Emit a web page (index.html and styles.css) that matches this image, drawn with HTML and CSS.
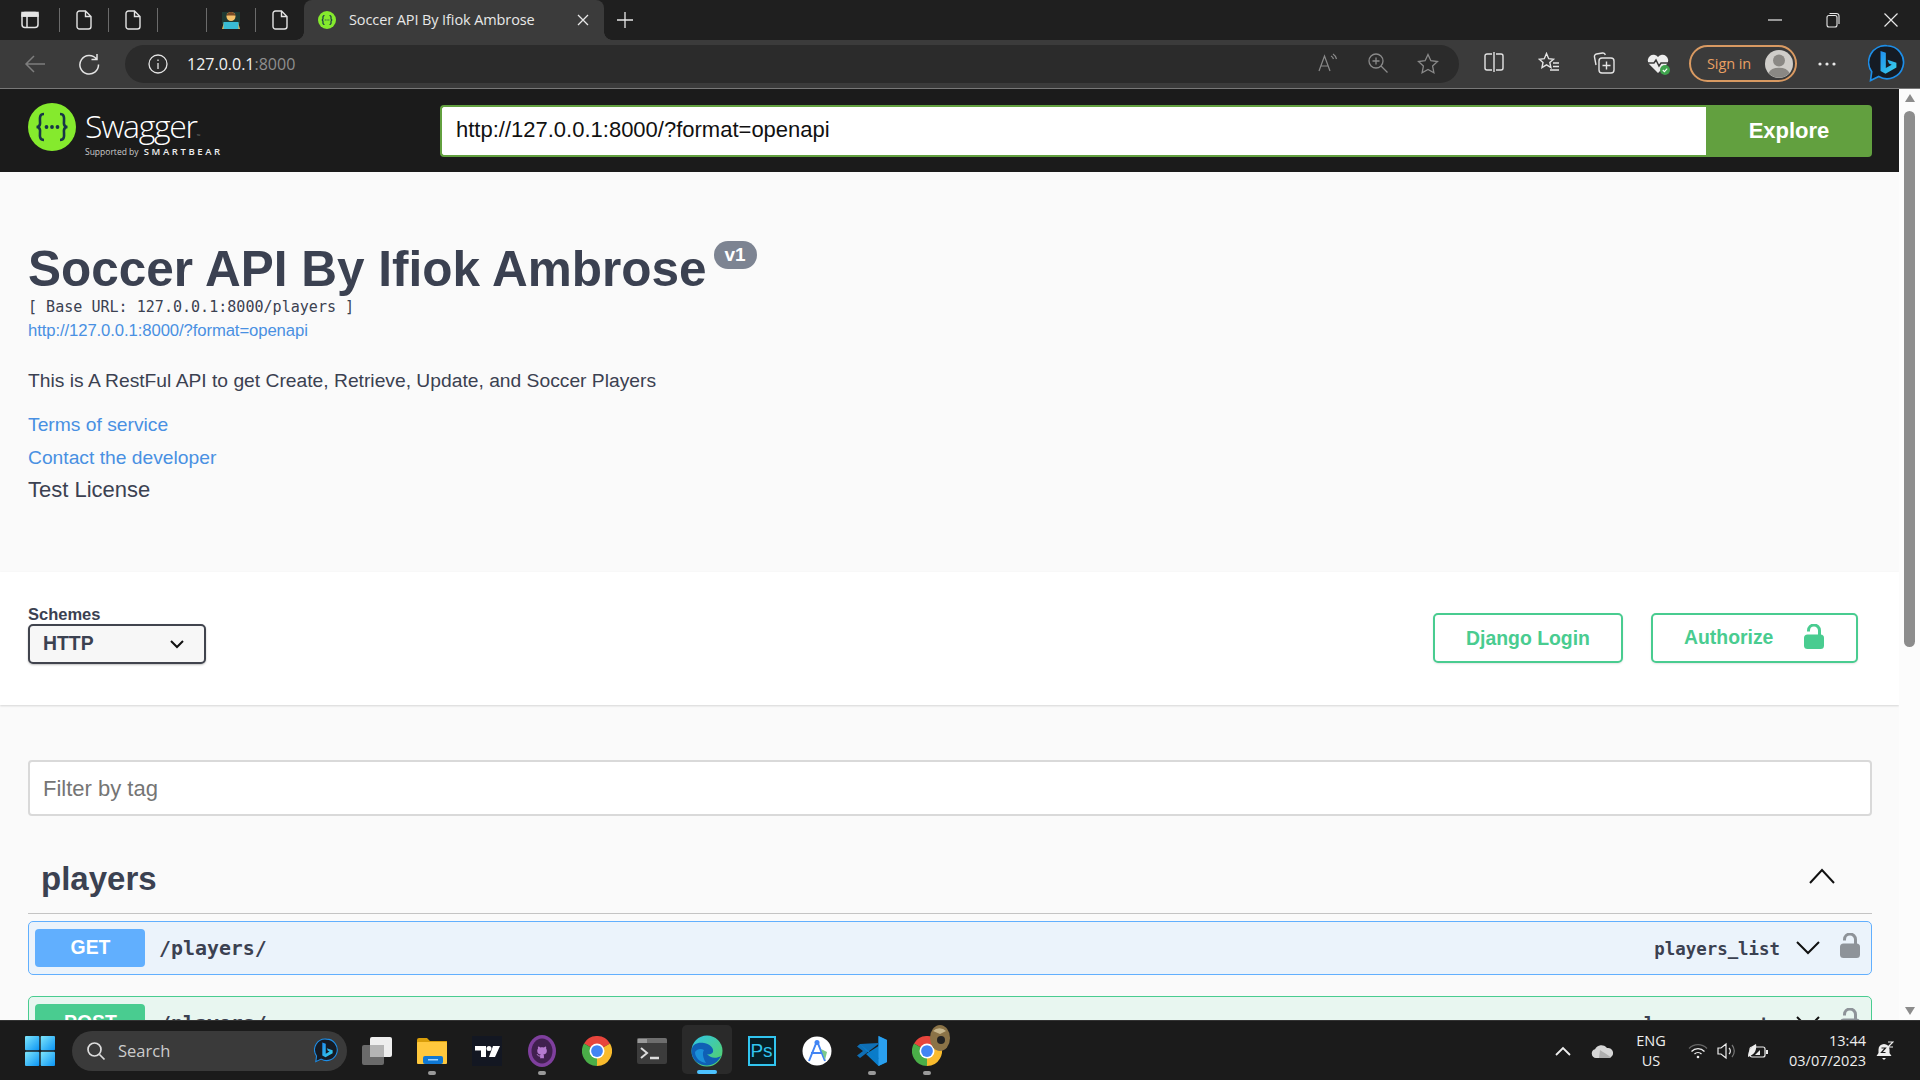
FILE: index.html
```html
<!DOCTYPE html>
<html lang="en">
<head>
    <meta charset="UTF-8">
    <meta name="viewport" content="width=device-width, initial-scale=1.0">
    <title>Soccer API By Ifiok Ambrose</title>
    <link rel="stylesheet" href="styles.css">
</head>
<body>

    <svg class="defs" width="0" height="0">
        <defs>
            <linearGradient id="bingGrad" x1="0" y1="0" x2="1" y2="1">
                <stop offset="0" stop-color="#1f8ef0"/>
                <stop offset="1" stop-color="#39d2e8"/>
            </linearGradient>
            <linearGradient id="edgeGrad" x1="0" y1="0" x2="1" y2="1">
                <stop offset="0" stop-color="#2fc4e8"/>
                <stop offset="1" stop-color="#58d25f"/>
            </linearGradient>
            <linearGradient id="startGrad" x1="0" y1="0" x2="1" y2="1">
                <stop offset="0" stop-color="#7fe6fb"/>
                <stop offset="1" stop-color="#0a94f5"/>
            </linearGradient>
            <symbol id="doc" viewBox="0 0 16 20">
                <path d="M3.5 1h6L15 6.5v10a2.5 2.5 0 0 1-2.5 2.5h-9A2.5 2.5 0 0 1 1 16.5v-13A2.5 2.5 0 0 1 3.500 1zM9.5 1v5.500H15" fill="none" stroke="#e4e4e4" stroke-width="1.4"/>
            </symbol>
            <symbol id="lock" viewBox="0 0 20 25">
                <path d="M4.5 7.500V6.500a5.500 5.500 0 0 1 11 0V12" fill="none" stroke="currentColor" stroke-width="3"/>
                <rect y="10.5" width="20" height="14.5" rx="3.5" fill="currentColor"/>
            </symbol>
            <symbol id="bing" viewBox="0 0 32 34">
                <path d="M16 1.500a14 14 0 1 1-7 26.100L2 31l1-7.500A14 14 0 0 1 16 1.500z" fill="#151b24" stroke="#1d8ee8" stroke-width="1.4"/>
                <path d="M10.500 6l4.500 1.500v13l5-2.800-2.300-1.100-1.300-3.300 7.600 2.700v4l-9.300 5.300-4.200-2.300z" fill="url(#bingGrad)"/>
            </symbol>
            <symbol id="chrome" viewBox="0 0 24 24">
                <path d="M12 12L1.600 6A12 12 0 0 1 22.400 6z" fill="#e8453c"/>
                <path d="M12 12L22.400 6A12 12 0 0 1 12 24z" fill="#f9bb2d"/>
                <path d="M12 12L12 24A12 12 0 0 1 1.600 6z" fill="#4aae48"/>
                <circle cx="12" cy="12" r="6" fill="#fff"/>
                <circle cx="12" cy="12" r="4.7" fill="#4285f4"/>
            </symbol>
        </defs>
    </svg>

    <!-- tab strip -->
    <div class="tabstrip">
        <div class="pin pin-first">
            <svg width="18" height="18" viewBox="0 0 18 18" fill="none" stroke="#e4e4e4" stroke-width="1.5"><rect x="1" y="1.5" width="16" height="15" rx="3"/><path d="M1 5h16M6 5v11.500"/><rect x="1" y="1.5" width="16" height="3.5" fill="#e4e4e4"/></svg>
        </div>
        <span class="sep"></span>
        <div class="pin"><svg width="16" height="20"><use href="#doc"/></svg></div>
        <span class="sep"></span>
        <div class="pin"><svg width="16" height="20"><use href="#doc"/></svg></div>
        <span class="sep"></span>
        <div class="pin"></div>
        <span class="sep"></span>
        <div class="pin">
            <svg width="20" height="20" viewBox="0 0 20 20"><rect x="1" y="2" width="18" height="12" fill="#1e3a34"/><circle cx="10" cy="6.5" r="4.5" fill="#f4c26b"/><path d="M5.500 6a4.500 4 0 0 1 9 0l-1-.5H6.500z" fill="#7a4a26"/><path d="M3 12h14l2 7H1z" fill="#f3b64a"/><rect x="2.5" y="12" width="15" height="7" fill="#39bcd4"/></svg>
        </div>
        <span class="sep"></span>
        <div class="pin"><svg width="16" height="20"><use href="#doc"/></svg></div>
        <div class="tab">
            <svg class="tab-fav" width="18" height="18" viewBox="0 0 18 18"><circle cx="9" cy="9" r="9" fill="#85ea2d"/><path d="M6.500 4.500c-2 0-1.500 2-1.500 3 0 1-.5 1.500-1.300 1.500.8 0 1.300.5 1.300 1.500s-.5 3 1.500 3M11.500 4.500c2 0 1.500 2 1.500 3 0 1 .5 1.500 1.300 1.500-.8 0-1.300.5-1.300 1.500s.5 3-1.500 3" fill="none" stroke="#173647" stroke-width="1.2"/><path d="M6.800 9h.9M8.600 9h.9M10.400 9h.9" stroke="#173647" stroke-width="1.2"/></svg>
            <span class="tab-title">Soccer API By Ifiok Ambrose</span>
            <svg class="tab-close" width="12" height="12" viewBox="0 0 12 12"><path d="M1 1l10 10M11 1L1 11" stroke="#e8e8e8" stroke-width="1.3"/></svg>
        </div>
        <svg class="tab-new" width="18" height="18" viewBox="0 0 18 18"><path d="M9 1v16M1 9h16" stroke="#e8e8e8" stroke-width="1.3"/></svg>
        <div class="win-btns">
            <svg width="14" height="14" viewBox="0 0 14 14"><path d="M0 7h14" stroke="#e8e8e8" stroke-width="1.2"/></svg>
            <svg width="14" height="16" viewBox="0 0 14 16" fill="none" stroke="#e8e8e8" stroke-width="1.1"><rect x="1" y="3.5" width="10" height="11.5" rx="2"/><path d="M3.500 1.500h7a2.500 2.500 0 0 1 2.500 2.500v8"/></svg>
            <svg width="14" height="14" viewBox="0 0 14 14"><path d="M.5.5l13 13M13.500.5l-13 13" stroke="#e8e8e8" stroke-width="1.2"/></svg>
        </div>
    </div>

    <!-- toolbar -->
    <div class="toolbar">
        <div class="tb-btn">
            <svg width="22" height="20" viewBox="0 0 22 20" fill="none" stroke="#7e7e7e" stroke-width="1.5"><path d="M21 10H2M10 2l-8 8 8 8"/></svg>
        </div>
        <div class="tb-btn">
            <svg width="22" height="22" viewBox="0 0 22 22" fill="none" stroke="#e4e4e4" stroke-width="1.5"><path d="M18.500 6a9.300 9.300 0 1 0 2 5.500M19 1v5.500h-5.500"/></svg>
        </div>
        <div class="address">
            <svg class="addr-info" width="20" height="20" viewBox="0 0 20 20" fill="none" stroke="#e4e4e4" stroke-width="1.3"><circle cx="10" cy="10" r="9"/><path d="M10 9v6M10 5.500v1.500"/></svg>
            <span class="addr-text">127.0.0.1<span class="addr-port">:8000</span></span>
            <div class="addr-right">
                <div class="addr-btn">
                    <svg width="20" height="20" viewBox="0 0 20 20" fill="none" stroke="#8a8a8a" stroke-width="1.2"><path d="M1 18L6.500 3 12 18M3 13h7"/><path d="M13 3a5 5 0 0 1 2.500 3M15 1a8 8 0 0 1 3.500 5"/></svg>
                </div>
                <div class="addr-btn">
                    <svg width="20" height="20" viewBox="0 0 20 20" fill="none" stroke="#8a8a8a" stroke-width="1.3"><circle cx="8" cy="8" r="7"/><path d="M13 13l6.500 6.500M8 4.500v7M4.500 8h7"/></svg>
                </div>
                <div class="addr-btn">
                    <svg width="22" height="22" viewBox="0 0 22 22" fill="none" stroke="#8a8a8a" stroke-width="1.3"><path d="M11 1.500l2.900 6.200 6.600.8-4.900 4.600 1.300 6.700L11 16.500l-5.900 3.300 1.300-6.700L1.500 8.500l6.600-.8z"/></svg>
                </div>
            </div>
        </div>
        <div class="tb-group">
            <div class="tb-icon">
                <svg width="20" height="20" viewBox="0 0 20 20" fill="none" stroke="#e4e4e4" stroke-width="1.4"><path d="M8 2H3a2 2 0 0 0-2 2v12a2 2 0 0 0 2 2h5M12 2h5a2 2 0 0 1 2 2v12a2 2 0 0 1-2 2h-5M10 0v20"/></svg>
            </div>
            <div class="tb-icon">
                <svg width="22" height="22" viewBox="0 0 22 22" fill="none" stroke="#e4e4e4" stroke-width="1.4"><path d="M8.500 1.500l2.200 5.200 4.800.5-3.700 3.300 1.100 5-4.400-2.600L4 15.500l1-5-3.700-3.300 5-.5zM15 11h6M15 14.500h6M12 18h9"/></svg>
            </div>
            <div class="tb-icon">
                <svg width="22" height="22" viewBox="0 0 22 22" fill="none" stroke="#e4e4e4" stroke-width="1.4"><path d="M3 13L1.500 5A2.500 2.500 0 0 1 3.500 2l6-1a2.500 2.500 0 0 1 2.800 2"/><rect x="6" y="6" width="15" height="15" rx="3"/><path d="M13.500 9.500v8M9.500 13.500h8"/></svg>
            </div>
            <div class="tb-icon">
                <svg width="24" height="24" viewBox="0 0 24 24"><path d="M11 21L2 12a5.500 5.500 0 0 1 9-7 5.500 5.500 0 0 1 9 7z" fill="#eee"/><path d="M1 11h6l2-3 3 6 2-3h8" fill="none" stroke="#3b3b3b" stroke-width="1.5"/><circle cx="18" cy="18" r="5" fill="#3fa34d"/><path d="M15.800 18l1.600 1.600 2.800-3" fill="none" stroke="#fff" stroke-width="1.1"/></svg>
            </div>
        </div>
        <div class="signin">
            <span class="signin-text">Sign in</span>
            <svg class="signin-avatar" width="28" height="28" viewBox="0 0 28 28"><circle cx="14" cy="14" r="14" fill="#cfcdc9"/><circle cx="14" cy="10.5" r="6" fill="#8a8884"/><path d="M3.500 23a11 7.500 0 0 1 21 0A14 14 0 0 1 3.500 23z" fill="#8a8884"/></svg>
        </div>
        <div class="tb-more">
            <svg width="18" height="4" viewBox="0 0 18 4" fill="#e8e8e8"><circle cx="2" cy="2" r="1.6"/><circle cx="9" cy="2" r="1.6"/><circle cx="16" cy="2" r="1.6"/></svg>
        </div>
        <div class="tb-bing"><svg width="38" height="40"><use href="#bing"/></svg></div>
    </div>

    <!-- page -->
    <div class="viewport">
        <div class="page">
            <div class="topbar">
                <div class="logo">
                    <svg width="48" height="48" viewBox="0 0 48 48"><circle cx="24" cy="24" r="24" fill="#85ea2d"/><path d="M16 11c-6 0-3.500 7-4 10-.3 2-1.500 3-3.500 3 2 0 3.200 1 3.500 3 .5 3-2 10 4 10M32 11c6 0 3.500 7 4 10 .3 2 1.500 3 3.500 3-2 0-3.200 1-3.500 3-.5 3 2 10-4 10" fill="none" stroke="#173647" stroke-width="2.6"/><circle cx="18.5" cy="24" r="1.9" fill="#173647"/><circle cx="24" cy="24" r="1.9" fill="#173647"/><circle cx="29.5" cy="24" r="1.9" fill="#173647"/></svg>
                    <div class="logo-text">
                        <div class="logo-name">Swagger<span class="logo-tm">™</span></div>
                        <div class="logo-by">Supported by <span class="logo-sb">SMARTBEAR</span></div>
                    </div>
                </div>
                <div class="explore-form">
                    <div class="explore-input">http://127.0.0.1:8000/?format=openapi</div>
                    <div class="explore-btn">Explore</div>
                </div>
            </div>

            <div class="info">
                <h1 class="title">Soccer API By Ifiok Ambrose<span class="version">v1</span></h1>
                <div class="base-url">[ Base URL: 127.0.0.1:8000/players ]</div>
                <a class="spec-link">http://127.0.0.1:8000/?format=openapi</a>
                <p class="desc">This is A RestFul API to get Create, Retrieve, Update, and Soccer Players</p>
                <a class="info-link terms">Terms of service</a>
                <a class="info-link contact">Contact the developer</a>
                <div class="license">Test License</div>
            </div>

            <div class="schemes">
                <div class="schemes-left">
                    <div class="schemes-label">Schemes</div>
                    <div class="schemes-select">
                        <span class="schemes-value">HTTP</span>
                        <svg width="14" height="9" viewBox="0 0 14 9" fill="none" stroke="#111" stroke-width="2"><path d="M1 1l6 6 6-6"/></svg>
                    </div>
                </div>
                <div class="schemes-right">
                    <div class="auth-btn login-btn">Django Login</div>
                    <div class="auth-btn authorize-btn">
                        <span class="authorize-text">Authorize</span>
                        <svg class="lock-green" width="20" height="25"><use href="#lock"/></svg>
                    </div>
                </div>
            </div>

            <div class="ops">
                <div class="filter">Filter by tag</div>
                <div class="tag-head">
                    <h3 class="tag-name">players</h3>
                    <svg class="tag-caret" width="28" height="16" viewBox="0 0 28 16" fill="none" stroke="#111" stroke-width="2"><path d="M2 15L14 2l12 13"/></svg>
                </div>
                <div class="op op-get">
                    <span class="method">GET</span>
                    <span class="op-path">/players/</span>
                    <span class="op-id">players_list</span>
                    <svg class="op-caret" width="24" height="14" viewBox="0 0 24 14" fill="none" stroke="#111" stroke-width="2"><path d="M1 1l11 11L23 1"/></svg>
                    <svg class="op-lock" width="20" height="25"><use href="#lock"/></svg>
                </div>
                <div class="op op-post">
                    <span class="method">POST</span>
                    <span class="op-path">/players/</span>
                    <span class="op-id">players_create</span>
                    <svg class="op-caret" width="24" height="14" viewBox="0 0 24 14" fill="none" stroke="#111" stroke-width="2"><path d="M1 1l11 11L23 1"/></svg>
                    <svg class="op-lock" width="20" height="25"><use href="#lock"/></svg>
                </div>
            </div>
        </div>

        <div class="scrollbar">
            <span class="arrow-up"></span>
            <div class="thumb"></div>
            <span class="arrow-down"></span>
        </div>
    </div>

    <!-- taskbar -->
    <div class="taskbar">
        <svg class="start" width="30" height="30" viewBox="0 0 30 30" fill="url(#startGrad)"><rect width="14.3" height="14.3" rx="1"/><rect x="15.7" width="14.3" height="14.3" rx="1"/><rect y="15.7" width="14.3" height="14.3" rx="1"/><rect x="15.7" y="15.7" width="14.3" height="14.3" rx="1"/></svg>
        <div class="search">
            <svg width="20" height="20" viewBox="0 0 20 20" fill="none" stroke="#ddd" stroke-width="1.7"><circle cx="8.5" cy="8.5" r="6.5"/><path d="M13.500 13.500l5 5"/></svg>
            <span class="search-text">Search</span>
            <svg class="search-bing" width="25" height="26"><use href="#bing"/></svg>
        </div>
        <div class="apps">
            <div class="app">
                <svg width="30" height="28" viewBox="0 0 30 28"><rect y="8" width="22" height="20" rx="2" fill="#6a6a6a"/><rect x="8" width="22" height="20" rx="2" fill="#eee"/><rect x="8" y="8" width="14" height="12" fill="#b4b4b4"/></svg>
            </div>
            <div class="app app-open">
                <svg width="30" height="26" viewBox="0 0 30 26"><path d="M0 2a2 2 0 0 1 2-2h8l3 3h17v3H0z" fill="#d99e0a"/><rect y="4" width="30" height="22" rx="1" fill="#ffc83d"/><rect x="6" y="18" width="20" height="8" rx="2" fill="#0f78d4"/><rect x="11" y="21" width="10" height="1.5" fill="#9fd4ff"/></svg>
            </div>
            <div class="app">
                <svg width="30" height="30" viewBox="0 0 30 30"><rect width="30" height="30" fill="#131722"/><path d="M3 10h11v11H9v-6.500H3z" fill="#fff"/><circle cx="17" cy="12.5" r="2.5" fill="#fff"/><path d="M21 10h7l-5 11h-6z" fill="#fff"/></svg>
            </div>
            <div class="app app-open">
                <svg width="28" height="32" viewBox="0 0 28 32"><ellipse cx="14" cy="16" rx="14" ry="16" fill="#7f3f9e"/><ellipse cx="14" cy="16" rx="10.5" ry="12.5" fill="#40204f"/><g transform="translate(6.5 8.5) scale(.94)"><path d="M5.470 15.590c.4.070.55-.17.55-.38v-1.490c-2.010.37-2.530-.49-2.690-.94-.09-.23-.48-.94-.82-1.130-.28-.15-.68-.52-.01-.53.63-.01 1.080.58 1.230.82.720 1.210 1.870.870 2.330.660.070-.520.280-.870.510-1.070-1.780-.2-3.640-.89-3.640-3.950 0-.87.310-1.590.820-2.150-.08-.2-.36-1.020.08-2.120 0 0 .67-.21 2.200.820.640-.18 1.320-.27 2-.27s1.360.09 2 .27c1.530-1.040 2.200-.82 2.200-.82.440 1.100.16 1.920.08 2.120.51.560.82 1.270.82 2.150 0 3.070-1.870 3.750-3.650 3.950.29.250.54.730.54 1.480v2.200c0 .21.150.46.55.38z" fill="#b57ad0"/></g></svg>
            </div>
            <div class="app">
                <svg width="30" height="30"><use href="#chrome"/></svg>
            </div>
            <div class="app">
                <svg width="30" height="26" viewBox="0 0 30 26"><rect width="30" height="26" rx="2" fill="#3c3c3c"/><path d="M0 2a2 2 0 0 1 2-2h26a2 2 0 0 1 2 2v3H0z" fill="#6e6e6e"/><rect x="1" y="1" width="9" height="4" fill="#9a9a9a"/><path d="M4 10l6 5-6 5" fill="none" stroke="#ddd" stroke-width="2"/><path d="M13 20h9" stroke="#ddd" stroke-width="2.5"/></svg>
            </div>
            <div class="app app-active">
                <svg width="32" height="32" viewBox="0 0 32 32"><circle cx="16" cy="16" r="15.5" fill="url(#edgeGrad)"/><path d="M.5 16C1 8 8 7 13 8c6 1 10 5 9 9-1 2-4 3-6 2 3 4 9 5 14 2-3 6-8 9.500-14 9.500C8 30.500.5 25 .5 16z" fill="#0f5fb5"/><path d="M4 17c2-3 6-4 9-2-2 3-1 8 2 13-6-1-11-5-11-11z" fill="#1b8fd8"/></svg>
            </div>
            <div class="app">
                <div class="ps"><span>Ps</span></div>
            </div>
            <div class="app">
                <svg width="30" height="30" viewBox="0 0 30 30"><circle cx="15" cy="15" r="14.5" fill="#fff"/><path d="M15 5l-8 20M15 5l8 20M9 17h12" fill="none" stroke="#4285f4" stroke-width="2"/><circle cx="15" cy="6.5" r="2.5" fill="#4285f4"/><path d="M19 13l6 3-2 8z" fill="#7cc98a"/></svg>
            </div>
            <div class="app app-open">
                <svg width="30" height="30" viewBox="0 0 30 30"><path d="M21.500 0L30 4v22l-8.500 4L9 18l12.500-8z" fill="#0a7cc9"/><path d="M21.500 0L30 4v22l-8.500 4z" fill="#2aa0ef"/><path d="M3 8L0 10.500 6 15l-6 4.500L3 22l18.500-14v-1z" fill="#0f6fb5"/><path d="M3 8l18.500 15v-1L9 15z" fill="#0a7cc9"/></svg>
            </div>
            <div class="app app-open app-profile">
                <svg width="30" height="30"><use href="#chrome"/></svg>
                <svg class="app-badge" width="20" height="26" viewBox="0 0 20 26"><ellipse cx="10" cy="13" rx="10" ry="13" fill="#8b7347"/><circle cx="11" cy="15" r="4" fill="#222"/><path d="M3 6a9 9 0 0 1 13 0l-6 3z" fill="#c7b68c"/></svg>
            </div>
        </div>
        <div class="tray">
            <svg class="tray-chev" width="16" height="10" viewBox="0 0 16 10" fill="none" stroke="#eee" stroke-width="1.8"><path d="M1 9l7-7 7 7"/></svg>
            <svg class="tray-cloud" width="22" height="14" viewBox="0 0 22 14"><path d="M5 14a4.500 4.500 0 0 1-1-8.800A7 7 0 0 1 16 4a5 5 0 0 1 2 10z" fill="#d6d6d6"/><path d="M9 6c3 2 8 5 11 7.500L18 14H8z" fill="#aeaeae"/></svg>
            <div class="tray-lang">ENG<br>US</div>
            <svg class="tray-wifi" width="20" height="16" viewBox="0 0 20 16" fill="none" stroke="#eee" stroke-width="1.3"><path d="M1 5.500a12.500 12.500 0 0 1 18 0" stroke="#666"/><path d="M3.500 8.500a9 9 0 0 1 13 0M6.500 11a5 5 0 0 1 7 0"/><circle cx="10" cy="14" r="1.3" fill="#eee" stroke="none"/></svg>
            <svg class="tray-vol" width="20" height="18" viewBox="0 0 20 18" fill="none" stroke="#eee" stroke-width="1.2"><path d="M1 6v6h3l5 4V2L4 6zM12 6a4 4 0 0 1 0 6"/><path d="M15 3a9 9 0 0 1 0 12" stroke="#777"/></svg>
            <svg class="tray-batt" width="21" height="16" viewBox="0 0 21 16"><rect x="3" y="4" width="15" height="10" rx="2" fill="none" stroke="#eee" stroke-width="1.2"/><path d="M19 7h2v4h-2z" fill="#eee"/><path d="M1 14c0-6 3-11 8-13 1 5-1 10-6 12z" fill="#eee"/><path d="M8 12l5-5v5z" fill="#eee"/></svg>
            <div class="tray-clock">13:44<br>03/07/2023</div>
            <svg class="tray-bell" width="18" height="20" viewBox="0 0 18 20"><path d="M8 3a5.500 5.500 0 0 1 5.500 5.500V12l2 3H.5l2-3V8.500A5.500 5.500 0 0 1 8 3z" fill="#eee"/><path d="M6 17h4l-2 2z" fill="#eee"/><path d="M5.500 7h4l-4 4.500h4" fill="none" stroke="#1b1b1b" stroke-width="1.2"/><path d="M12 1h5l-5 5h5" fill="none" stroke="#eee" stroke-width="1.2"/></svg>
        </div>
    </div>

</body>
</html>
```

FILE: styles.css
```css
* {
    box-sizing: border-box;
}

body {
    margin: 0;
    width: 1920px;
    height: 1080px;
    overflow: hidden;
    display: flex;
    flex-direction: column;
    font-family: 'Liberation Sans', Arial, sans-serif;
    background-color: #fafafa;
}

svg {
    display: block;
    flex: none;
}

.defs {
    position: absolute;
}

/* tab strip */
.tabstrip {
    height: 40px;
    flex: none;
    display: flex;
    align-items: center;
    background-color: #1f1f1f;
}

.pin {
    width: 48px;
    height: 40px;
    display: flex;
    align-items: center;
    justify-content: center;
}

.pin-first {
    width: 59px;
}

.sep {
    width: 1px;
    height: 24px;
    background-color: #6b6b6b;
}

.tab {
    position: relative;
    width: 300px;
    height: 40px;
    display: flex;
    align-items: center;
    background-color: #3b3b3b;
    border-radius: 8px 8px 0 0;
    padding-left: 14px;
}

.tab::before,
.tab::after {
    content: "";
    position: absolute;
    bottom: 0;
    width: 8px;
    height: 8px;
}

.tab::before {
    left: -8px;
    background: radial-gradient(circle at 0 0, transparent 7.5px, #3b3b3b 8px);
}

.tab::after {
    right: -8px;
    background: radial-gradient(circle at 100% 0, transparent 7.5px, #3b3b3b 8px);
}

.tab-title {
    margin: -2px 0 0 13px;
    width: 219px;
    font-family: 'Open Sans', sans-serif;
    font-size: 14.5px;
    letter-spacing: -0.1px;
    color: #e8e8e8;
    white-space: nowrap;
}

.tab-close {
    margin-left: 9px;
}

.tab-new {
    margin-left: 12px;
}

.win-btns {
    margin-left: auto;
    display: flex;
    align-items: center;
    gap: 44px;
    padding-right: 22px;
}

/* toolbar */
.toolbar {
    height: 49px;
    flex: none;
    display: flex;
    align-items: center;
    padding: 0 0 1px 8px;
    background-color: #3b3b3b;
    border-bottom: 1px solid #787878;
}

.tb-btn {
    width: 54px;
    display: flex;
    justify-content: center;
}

.address {
    margin-left: 9px;
    width: 1334px;
    height: 38px;
    display: flex;
    align-items: center;
    padding: 0 6px 0 23px;
    background-color: #2b2b2b;
    border-radius: 19px;
}

.addr-text {
    margin-left: 19px;
    font-family: 'Open Sans', sans-serif;
    font-size: 16px;
    color: #f2f2f2;
}

.addr-port {
    color: #8f8f8f;
}

.addr-right {
    margin-left: auto;
    display: flex;
}

.addr-btn {
    width: 50px;
    display: flex;
    justify-content: center;
}

.tb-group {
    margin-left: 7px;
    display: flex;
}

.tb-icon {
    width: 55px;
    display: flex;
    justify-content: center;
}

.signin {
    margin-left: 3px;
    width: 108px;
    height: 37px;
    display: flex;
    align-items: center;
    padding-left: 16px;
    border: 2px solid #d99a62;
    border-radius: 19px;
}

.signin-text {
    font-family: 'Open Sans', sans-serif;
    font-size: 14.5px;
    letter-spacing: -0.1px;
    color: #e9a063;
}

.signin-avatar {
    margin-left: auto;
    margin-right: 2px;
}

.tb-more {
    width: 60px;
    display: flex;
    justify-content: center;
}

.tb-bing {
    width: 60px;
    display: flex;
    justify-content: center;
}

/* page */
.viewport {
    flex: 1;
    min-height: 0;
    display: flex;
}

.page {
    width: 1899px;
    flex: none;
    overflow: hidden;
    background-color: #fafafa;
}

.topbar {
    height: 83px;
    display: flex;
    align-items: center;
    padding: 0 27px 0 28px;
    background-color: #1b1b1b;
}

.logo {
    width: 412px;
    align-self: flex-start;
    margin-top: 14px;
    display: flex;
    align-items: flex-start;
    color: #fff;
}

.logo-text {
    margin: 8px 0 0 9px;
    font-family: 'Open Sans', sans-serif;
}

.logo-name {
    font-size: 32px;
    font-weight: 300;
    line-height: 30px;
    letter-spacing: -1.3px;
}

.logo-tm {
    font-size: 5px;
    letter-spacing: 0;
    color: #999;
}

.logo-by {
    margin-top: -5px;
    font-size: 8.5px;
    line-height: 12px;
    color: #ccc;
}

.logo-sb {
    margin-left: 3px;
    font-size: 9.5px;
    font-weight: 600;
    letter-spacing: 2.6px;
    color: #eee;
}

.explore-form {
    flex: 1;
    height: 52px;
    display: flex;
}

.explore-input {
    flex: 1;
    display: flex;
    align-items: center;
    padding: 0 0 2px 14px;
    font-size: 22px;
    color: #111;
    background-color: #fff;
    border: 2px solid #62a03f;
    border-right: none;
    border-radius: 4px 0 0 4px;
}

.explore-btn {
    width: 166px;
    display: flex;
    align-items: center;
    justify-content: center;
    font-size: 22px;
    font-weight: bold;
    color: #fff;
    background-color: #62a03f;
    border-radius: 0 4px 4px 0;
}

/* info block */
.info {
    height: 400px;
    padding: 68px 0 0 28px;
    color: #3b4151;
}

.title {
    margin: 0;
    display: flex;
    align-items: flex-start;
    font-size: 49.5px;
    font-weight: bold;
    line-height: 58px;
    white-space: nowrap;
}

.version {
    margin: 1px 0 0 7px;
    width: 43px;
    height: 28px;
    display: flex;
    align-items: center;
    justify-content: center;
    font-size: 19px;
    line-height: 28px;
    color: #fff;
    background-color: #7d8492;
    border-radius: 14px;
}

.base-url {
    font-family: 'DejaVu Sans Mono', monospace;
    font-size: 15.05px;
    line-height: 18px;
}

.spec-link {
    display: block;
    margin-top: 5px;
    font-size: 16.7px;
    line-height: 20px;
    letter-spacing: -0.1px;
    color: #4990e2;
}

.desc {
    margin: 28px 0 0;
    font-size: 19.25px;
    line-height: 24px;
}

.info-link {
    display: block;
    font-size: 19.25px;
    line-height: 24px;
    color: #4990e2;
}

.terms {
    margin-top: 20px;
}

.contact {
    margin-top: 9px;
}

.license {
    margin-top: 7px;
    font-size: 22px;
    line-height: 26px;
}

/* schemes */
.schemes {
    position: relative;
    height: 133px;
    display: flex;
    justify-content: space-between;
    align-items: flex-start;
    padding: 0 41px 0 28px;
    background-color: #fff;
    box-shadow: 0 1px 2px rgba(0, 0, 0, 0.15);
}

.schemes-left {
    margin-top: 33px;
}

.schemes-label {
    font-size: 16.5px;
    font-weight: bold;
    line-height: 19px;
    color: #3b4151;
}

.schemes-select {
    width: 178px;
    height: 40px;
    display: flex;
    align-items: center;
    justify-content: space-between;
    padding: 0 20px 0 13px;
    font-size: 19.4px;
    font-weight: bold;
    color: #3b4151;
    background-color: #f7f7f7;
    border: 2px solid #41444e;
    border-radius: 5px;
    box-shadow: 0 1px 2px rgba(0, 0, 0, 0.25);
}

.schemes-value {
    margin-top: -2px;
}

.schemes-right {
    margin-top: 41px;
    display: flex;
    gap: 28px;
}

.auth-btn {
    height: 50px;
    display: flex;
    align-items: center;
    font-size: 19.4px;
    font-weight: bold;
    color: #49cc90;
    background-color: #fff;
    border: 2px solid #49cc90;
    border-radius: 5px;
    box-shadow: 0 1px 2px rgba(0, 0, 0, 0.1);
}

.login-btn {
    width: 190px;
    justify-content: center;
}

.authorize-btn {
    width: 207px;
    padding-left: 31px;
}

.authorize-text {
    margin-top: -2px;
}

.lock-green {
    margin: -3px 0 0 31px;
    color: #49cc90;
}

/* operations */
.ops {
    padding: 55px 27px 0 28px;
}

.filter {
    height: 56px;
    display: flex;
    align-items: center;
    padding: 2px 0 0 13px;
    font-size: 22px;
    color: #757575;
    background-color: #fff;
    border: 2px solid #d9d9d9;
    border-radius: 4px;
}

.tag-head {
    margin-top: 41px;
    height: 57px;
    display: flex;
    align-items: flex-start;
    padding-left: 13px;
    border-bottom: 1px solid #c4c4c4;
}

.tag-name {
    margin: 2px 0 0;
    font-size: 33px;
    font-weight: bold;
    line-height: 40px;
    color: #3b4151;
}

.tag-caret {
    margin: 11px 36px 0 auto;
}

.op {
    height: 54px;
    display: flex;
    align-items: center;
    padding: 0 11px 0 6px;
    border-width: 1px;
    border-style: solid;
    border-radius: 5px;
}

.op-get {
    margin-top: 7px;
    background-color: #ebf3fb;
    border-color: #61affe;
}

.op-post {
    margin-top: 21px;
    background-color: #e8f6f0;
    border-color: #49cc90;
}

.method {
    width: 110px;
    height: 38px;
    display: flex;
    align-items: center;
    justify-content: center;
    padding: 0 0 2px 1px;
    font-size: 19.4px;
    font-weight: bold;
    color: #fff;
    border-radius: 4px;
}

.op-get .method {
    background-color: #61affe;
}

.op-post .method {
    background-color: #49cc90;
}

.op-path {
    margin-left: 14px;
    font-family: 'DejaVu Sans Mono', monospace;
    font-size: 19.9px;
    font-weight: bold;
    color: #3b4151;
}

.op-id {
    margin-left: auto;
    padding-top: 2px;
    font-family: 'DejaVu Sans Mono', monospace;
    font-size: 17.4px;
    font-weight: bold;
    color: #3b4151;
}

.op-caret {
    margin-left: 16px;
}

.op-lock {
    margin: -5px 0 0 20px;
    color: #8e9399;
}

/* scrollbar */
.scrollbar {
    flex: 1;
    display: flex;
    flex-direction: column;
    align-items: center;
    padding-top: 5px;
    background-color: #fcfcfc;
}

.arrow-up,
.arrow-down {
    width: 0;
    height: 0;
    border-left: 5.5px solid transparent;
    border-right: 5.5px solid transparent;
}

.arrow-up {
    border-bottom: 8px solid #8c8c8c;
}

.arrow-down {
    margin-top: auto;
    margin-bottom: 5px;
    border-top: 8px solid #8c8c8c;
}

.thumb {
    margin-top: 9px;
    width: 11px;
    height: 536px;
    background-color: #8c8c8c;
    border-radius: 6px;
}

/* taskbar */
.taskbar {
    height: 60px;
    flex: none;
    display: flex;
    align-items: center;
    padding-left: 25px;
    background-color: #1b1b1b;
    border-top: 1px solid #333;
}

.search {
    margin-left: 17px;
    width: 275px;
    height: 40px;
    display: flex;
    align-items: center;
    padding: 0 8px 0 14px;
    background-color: #3a3a3a;
    border-radius: 20px;
}

.search-text {
    margin-left: 12px;
    font-family: 'Open Sans', sans-serif;
    font-size: 16.5px;
    color: #ccc;
}

.search-bing {
    margin-left: auto;
}

.apps {
    margin-left: 2px;
    display: flex;
}

.app {
    position: relative;
    width: 55px;
    height: 59px;
    display: flex;
    align-items: center;
    justify-content: center;
}

.app-open::after {
    content: "";
    position: absolute;
    bottom: 5px;
    left: 23.5px;
    width: 8px;
    height: 4px;
    background-color: #9a9a9a;
    border-radius: 2px;
}

.app-active::before {
    content: "";
    position: absolute;
    top: 4px;
    left: 2.5px;
    width: 50px;
    height: 49px;
    background-color: #2a2a2a;
    border-radius: 5px;
}

.app-active::after {
    content: "";
    position: absolute;
    bottom: 6px;
    left: 17.5px;
    width: 20px;
    height: 4px;
    background-color: #4cc2ff;
    border-radius: 2px;
}

.app-active svg {
    position: relative;
}

.app-badge {
    position: absolute;
    top: 4px;
    left: 31px;
}

.ps {
    width: 28px;
    height: 30px;
    display: flex;
    align-items: center;
    justify-content: center;
    font-size: 19px;
    color: #31c5f0;
    background-color: #061e26;
    border: 2px solid #31c5f0;
}

.tray {
    margin-left: auto;
    display: flex;
    align-items: center;
    padding-right: 26px;
    color: #eee;
    font-family: 'Open Sans', sans-serif;
    font-size: 14.5px;
    line-height: 20px;
}

.tray-cloud {
    margin-left: 20px;
}

.tray-lang {
    margin-left: 21px;
    width: 34px;
    text-align: center;
}

.tray-wifi {
    margin-left: 20px;
}

.tray-vol {
    margin-left: 9px;
}

.tray-batt {
    margin-left: 10px;
}

.tray-clock {
    margin-left: 14px;
    width: 84px;
    text-align: right;
    white-space: nowrap;
}

.tray-bell {
    margin-left: 10px;
}
```
